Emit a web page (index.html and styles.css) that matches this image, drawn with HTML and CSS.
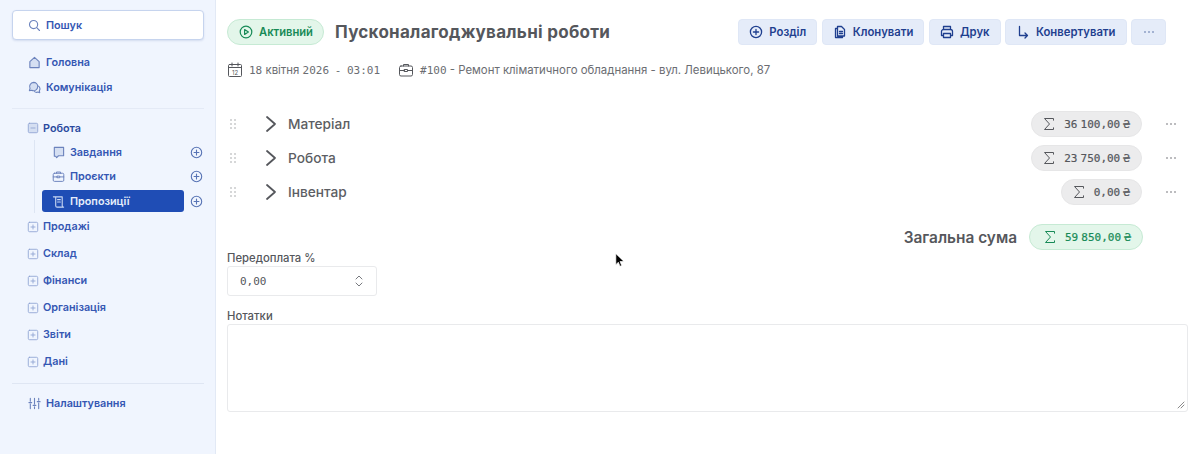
FILE: index.html
```html
<!DOCTYPE html>
<html lang="uk">
<head>
    <meta charset="UTF-8">
    <title>Пусконалагоджувальні роботи</title>
    <link rel="stylesheet" href="styles.css">
</head>
<body>
    <svg class="icon-defs" width="0" height="0">
        <defs>
            <symbol id="i-plus-circle" viewBox="0 0 14 14"><circle cx="7" cy="7" r="5.6"/><path d="M7 4.4v5.2M4.4 7h5.2"/></symbol>
            <symbol id="i-box-plus" viewBox="0 0 14 14"><rect class="fill" x="1.5" y="1.5" width="11" height="11" rx="1.5"/><path d="M7 4.6v4.8M4.6 7h4.8"/></symbol>
            <symbol id="i-sigma" viewBox="0 0 14 14"><path d="M11.5 3.2V1.5H2.5L7.5 7l-5 5.5h9v-1.7"/></symbol>
            <symbol id="i-dots" viewBox="0 0 14 14"><circle class="dot" cx="3" cy="7" r=".8"/><circle class="dot" cx="7" cy="7" r=".8"/><circle class="dot" cx="11" cy="7" r=".8"/></symbol>
            <symbol id="i-grip" viewBox="0 0 10 14"><circle class="dot" cx="3" cy="3" r=".7"/><circle class="dot" cx="7" cy="3" r=".7"/><circle class="dot" cx="3" cy="7" r=".7"/><circle class="dot" cx="7" cy="7" r=".7"/><circle class="dot" cx="3" cy="11" r=".7"/><circle class="dot" cx="7" cy="11" r=".7"/></symbol>
            <symbol id="i-chevron" viewBox="0 0 14 18"><path d="M3 2l8 7-8 7"/></symbol>
            <symbol id="i-briefcase" viewBox="0 0 16 16"><rect x="1.5" y="4" width="13" height="10" rx="1.5"/><path d="M5.5 4V2.5h5V4M1.5 8.5h5M9.5 8.5h5M6.5 7.5h3v2h-3z"/></symbol>
        </defs>
    </svg>

    <div class="app">
        <aside class="sidebar">
            <div class="search">
                <svg class="nav-icon" viewBox="0 0 14 14"><circle cx="6" cy="6" r="4.4"/><path d="M9.4 9.4l3 3"/></svg>
                <span>Пошук</span>
            </div>

            <nav class="nav-top">
                <a class="nav-link">
                    <svg class="nav-icon" viewBox="0 0 14 14"><path class="fill" d="M7 1.5l5 4.6v6.4H2V6.1z"/></svg>
                    <span>Головна</span>
                </a>
                <a class="nav-link">
                    <svg class="nav-icon" viewBox="0 0 14 14"><path class="fill" d="M6 1.5a4.5 4.5 0 0 1 4.5 4.5A4.5 4.5 0 0 1 4 10L1.5 10.500 2.200 8A4.500 4.500 0 0 1 6 1.500z"/><path d="M11.300 5.500a3.500 3.500 0 0 1 .9 5l.4 2-2-.6a3.500 3.500 0 0 1-3.600-.4"/></svg>
                    <span>Комунікація</span>
                </a>
            </nav>

            <nav class="nav-groups">
                <div class="group group-open">
                    <svg class="box-icon" viewBox="0 0 14 14"><rect class="fill" x="1.5" y="1.500" width="11" height="11" rx="1.500"/><path d="M4.600 7h4.800"/></svg>
                    <span>Робота</span>
                </div>
                <ul class="subnav">
                    <li class="sub-row">
                        <a class="sub-link">
                            <svg class="nav-icon" viewBox="0 0 14 14"><path class="fill" d="M2.500 1.500h10v9H7l-2 2-1-1.500H2.500z"/></svg>
                            <span>Завдання</span>
                        </a>
                        <svg class="add-icon"><use href="#i-plus-circle"/></svg>
                    </li>
                    <li class="sub-row">
                        <a class="sub-link">
                            <svg class="nav-icon"><use href="#i-briefcase"/></svg>
                            <span>Проєкти</span>
                        </a>
                        <svg class="add-icon"><use href="#i-plus-circle"/></svg>
                    </li>
                    <li class="sub-row">
                        <a class="sub-link active">
                            <svg class="nav-icon" viewBox="0 0 14 14"><path d="M1.500 2h9.500v9.500a1.500 1.500 0 0 0 1.500 1.500H5.500A1.500 1.500 0 0 1 4 11.500V2.200M6 5h3M6 7.500h3"/></svg>
                            <span>Пропозиції</span>
                        </a>
                        <svg class="add-icon"><use href="#i-plus-circle"/></svg>
                    </li>
                </ul>
                <div class="group"><svg class="box-icon"><use href="#i-box-plus"/></svg><span>Продажі</span></div>
                <div class="group"><svg class="box-icon"><use href="#i-box-plus"/></svg><span>Склад</span></div>
                <div class="group"><svg class="box-icon"><use href="#i-box-plus"/></svg><span>Фінанси</span></div>
                <div class="group"><svg class="box-icon"><use href="#i-box-plus"/></svg><span>Організація</span></div>
                <div class="group"><svg class="box-icon"><use href="#i-box-plus"/></svg><span>Звіти</span></div>
                <div class="group"><svg class="box-icon"><use href="#i-box-plus"/></svg><span>Дані</span></div>
            </nav>

            <a class="nav-link nav-settings">
                <svg class="nav-icon" viewBox="0 0 14 14"><path d="M2.500 1.500v3M2.500 7.500v5M7 1.500v6M7 10.500v2M11.500 1.500v2M11.500 6.500v6M1 6h3M5.500 9h3M10 5h3"/></svg>
                <span>Налаштування</span>
            </a>
        </aside>

        <main class="content">
            <header class="page-head">
                <span class="status">
                    <svg viewBox="0 0 14 14"><circle cx="7" cy="7" r="5.800"/><path d="M5.600 4.600L9.400 7 5.600 9.400z"/></svg>
                    Активний
                </span>
                <h1>Пусконалагоджувальні роботи</h1>
                <div class="actions">
                    <button class="btn"><svg><use href="#i-plus-circle"/></svg>Розділ</button>
                    <button class="btn"><svg viewBox="0 0 14 14"><path d="M4 3.500H2.500v9h7V11M4.500 1.500h4L11.500 4.500V11h-7zM6.500 6.500h3M6.500 8.500h3"/></svg>Клонувати</button>
                    <button class="btn"><svg viewBox="0 0 14 14"><path d="M3.500 4.500v-3h7v3M3.500 10.500H1.500v-4a2 2 0 0 1 2-2h7a2 2 0 0 1 2 2v4h-2M3.500 8.500h7v4h-7z"/></svg>Друк</button>
                    <button class="btn"><svg viewBox="0 0 14 14"><path d="M3.500 1.500v9h8M9 8l2.500 2.500L9 13"/></svg>Конвертувати</button>
                    <button class="btn btn-more"><svg><use href="#i-dots"/></svg></button>
                </div>
            </header>

            <div class="meta">
                <span class="meta-item">
                    <svg viewBox="0 0 16 16"><rect x="1.500" y="2.500" width="13" height="12" rx="1"/><path d="M1.500 5.500h13M5 1v3M11 1v3"/><text x="8" y="12.600" text-anchor="middle" class="cal-day">12</text></svg>
                    <span><span class="mono">18</span> квітня <span class="mono date-time">2026 - 03:01</span></span>
                </span>
                <span class="meta-item">
                    <svg><use href="#i-briefcase"/></svg>
                    <span><span class="mono">#100</span> - Ремонт кліматичного обладнання - вул. Левицького, 87</span>
                </span>
            </div>

            <section class="sections">
                <div class="section-row">
                    <svg class="grip"><use href="#i-grip"/></svg>
                    <svg class="chevron"><use href="#i-chevron"/></svg>
                    <span class="section-name">Матеріал</span>
                    <span class="sum"><svg><use href="#i-sigma"/></svg>36 100,00 ₴</span>
                    <svg class="row-more"><use href="#i-dots"/></svg>
                </div>
                <div class="section-row">
                    <svg class="grip"><use href="#i-grip"/></svg>
                    <svg class="chevron"><use href="#i-chevron"/></svg>
                    <span class="section-name">Робота</span>
                    <span class="sum"><svg><use href="#i-sigma"/></svg>23 750,00 ₴</span>
                    <svg class="row-more"><use href="#i-dots"/></svg>
                </div>
                <div class="section-row">
                    <svg class="grip"><use href="#i-grip"/></svg>
                    <svg class="chevron"><use href="#i-chevron"/></svg>
                    <span class="section-name">Інвентар</span>
                    <span class="sum"><svg><use href="#i-sigma"/></svg>0,00 ₴</span>
                    <svg class="row-more"><use href="#i-dots"/></svg>
                </div>
            </section>

            <div class="total">
                <span class="total-label">Загальна сума</span>
                <span class="sum sum-total"><svg><use href="#i-sigma"/></svg>59 850,00 ₴</span>
            </div>

            <label class="field-label field-prepay">Передоплата %</label>
            <div class="number-input">
                <span class="mono">0,00</span>
                <svg viewBox="0 0 10 14"><path d="M2 5l3-3 3 3M2 9l3 3 3-3"/></svg>
            </div>

            <label class="field-label field-notes">Нотатки</label>
            <div class="notes">
                <svg class="resize" viewBox="0 0 8 8"><path d="M1 7l6-6M4 7l3-3"/></svg>
            </div>
        </main>
    </div>

    <svg class="cursor" viewBox="0 0 12 18"><path d="M1 1v13l3-3 2 5 2-1-2-4.800h4.500z"/></svg>
</body>
</html>
```

FILE: styles.css
```css
* { box-sizing: border-box; }

body {
    margin: 0;
    height: 454px;
    overflow: hidden;
    background: #fff;
    font-family: Inter, "Noto Sans", sans-serif;
    color: #55575c;
}

svg {
    fill: none;
    stroke: currentColor;
    stroke-width: 1.2;
    stroke-linecap: round;
    stroke-linejoin: round;
}
svg .dot { fill: currentColor; stroke: none; }
.icon-defs { position: absolute; }
.mono { font-family: "DejaVu Sans Mono", "Liberation Mono", monospace; font-size: 11px; }

.app { display: flex; height: 454px; }

/* sidebar */
.sidebar {
    width: 216px;
    flex-shrink: 0;
    padding: 10px 11px 0 12px;
    background: #f0f5fe;
    border-right: 1px solid #e2e9f5;
    color: #3557b3;
    font-size: 10.8px;
    font-weight: 600;
}
.search {
    display: flex;
    align-items: center;
    gap: 5px;
    height: 30px;
    padding-left: 15px;
    background: #fff;
    border: 1px solid #c6d4ee;
    border-radius: 4px;
    box-shadow: 0 1px 2px rgba(60, 90, 160, 0.15);
}
.nav-icon { width: 13px; height: 13px; flex-shrink: 0; color: #6c83bd; }
.nav-icon .fill, .box-icon .fill { fill: #d5dff2; }
.nav-top {
    margin: 10px 0 0;
    padding-bottom: 8px;
    border-bottom: 1px solid #e4eaf6;
}
.nav-link {
    display: flex;
    align-items: center;
    gap: 5px;
    height: 25px;
    padding-left: 16px;
}
.nav-groups {
    padding: 7px 0 8px;
    border-bottom: 1px solid #dfe6f3;
}
.group {
    display: flex;
    align-items: center;
    gap: 4px;
    height: 27px;
    padding-left: 15px;
}
.group-open { height: 24px; color: #2a4a9e; }
.box-icon { width: 12px; height: 12px; flex-shrink: 0; color: #8fa3d2; stroke-width: 1; }
.subnav {
    list-style: none;
    margin: 0 0 0 22px;
    padding: 0 0 0 7px;
    height: 73px;
    border-left: 1px solid #dde5f3;
}
.sub-row {
    display: flex;
    align-items: center;
    height: 24.500px;
}
.sub-link {
    display: flex;
    align-items: center;
    gap: 5px;
    width: 142px;
    height: 22px;
    padding-left: 10px;
    border-radius: 3px;
}
.sub-link.active { background: #1f4db5; color: #e6edfb; }
.sub-link.active .nav-icon { color: #c9d7f3; }
.add-icon { width: 13px; height: 13px; margin-left: 6px; color: #5874b5; }
.nav-settings { margin-top: 7px; height: 25px; }

/* main area */
.content {
    flex: 1;
    padding: 19px 12px 0 11px;
    min-width: 0;
}
.page-head { display: flex; align-items: center; height: 26px; }
.status {
    display: flex;
    align-items: center;
    gap: 6px;
    width: 97px;
    height: 26px;
    padding-left: 11px;
    background: #e3f6ea;
    border: 1px solid #c6ead4;
    border-radius: 13px;
    color: #178a57;
    font-size: 11.200px;
    font-weight: 600;
}
.status svg { width: 14px; height: 14px; flex-shrink: 0; }
h1 {
    margin: 0 0 0 11px;
    font-size: 17px;
    font-weight: 700;
    letter-spacing: 0.27px;
    color: #55575c;
}
.actions { display: flex; gap: 4.500px; margin-left: auto; margin-right: 22px; }
.btn {
    display: flex;
    align-items: center;
    justify-content: center;
    gap: 6px;
    height: 26px;
    padding: 0 10px;
    background: #e5ecf9;
    border: 1px solid #dfe7f6;
    border-radius: 4px;
    color: #1f3f8f;
    font-family: inherit;
    font-size: 11.300px;
    font-weight: 600;
}
.btn svg { width: 14px; height: 14px; flex-shrink: 0; stroke-width: 1.300; }
.btn-more { width: 35px; padding: 0; color: #51699f; }

.meta {
    display: flex;
    gap: 18px;
    margin-top: 15px;
    height: 20px;
    align-items: center;
    font-size: 11.400px;
    color: #6b6d72;
}
.date-time { word-spacing: -1px; }
.meta-item { display: flex; align-items: center; gap: 6px; }
.meta-item svg { width: 16px; height: 16px; flex-shrink: 0; color: #55575c; stroke-width: 1; }
.cal-day { font-size: 6px; fill: currentColor; stroke: none; }

.sections { margin-top: 27px; }
.section-row { display: flex; align-items: center; height: 34px; }
.grip { width: 10px; height: 14px; margin-left: 1px; color: #8e9094; }
.chevron { width: 14px; height: 18px; margin-left: 26px; color: #55575c; stroke-width: 1.800; }
.section-name { margin-left: 10px; font-size: 13.700px; font-weight: 500; color: #5c5e63; }
.sum {
    display: flex;
    align-items: center;
    gap: 8px;
    height: 26px;
    margin-left: auto;
    padding: 0 11px 0 10px;
    background: #ececed;
    border: 1px solid #e6e6e7;
    border-radius: 13px;
    font-family: "DejaVu Sans Mono", monospace;
    font-size: 11px;
    word-spacing: -3.500px;
    -webkit-text-stroke: 0.2px currentColor;
    color: #55575c;
}
.sum svg { width: 14px; height: 14px; stroke-width: 1; }
.row-more { width: 14px; height: 14px; margin: 0 10px 0 22px; color: #66686d; }

.total {
    display: flex;
    justify-content: flex-end;
    align-items: center;
    gap: 12px;
    margin-top: 15px;
    padding-right: 45px;
    height: 26px;
}
.total-label { font-size: 15.400px; font-weight: 600; color: #55575c; }
.sum-total {
    margin-left: 0;
    width: 114px;
    background: #e3f6ea;
    border-color: #c6ead4;
    color: #178a57;
    padding: 0 0 0 13px;
}

.field-label { display: block; font-size: 11.300px; font-weight: 500; color: #55575c; }
.field-prepay { margin-top: 1px; height: 14px; line-height: 14px; }
.number-input {
    display: flex;
    align-items: center;
    justify-content: space-between;
    width: 150px;
    height: 30px;
    margin-top: 1px;
    padding: 0 12px;
    border: 1px solid #e9eaec;
    border-radius: 3px;
    color: #55575c;
}
.number-input svg { width: 10px; height: 14px; color: #77797e; stroke-width: 1; }
.field-notes { margin-top: 13px; height: 14px; line-height: 14px; }
.notes {
    position: relative;
    height: 88px;
    margin-top: 1px;
    border: 1px solid #e9eaec;
    border-radius: 3px;
}
.resize { position: absolute; right: 2px; bottom: 2px; width: 8px; height: 8px; color: #8a8a8a; stroke-width: 1; }

.cursor {
    position: absolute;
    left: 615px;
    top: 253px;
    width: 10px;
    height: 15px;
    fill: #000;
    stroke: #fff;
    stroke-width: 0.8;
}
```
